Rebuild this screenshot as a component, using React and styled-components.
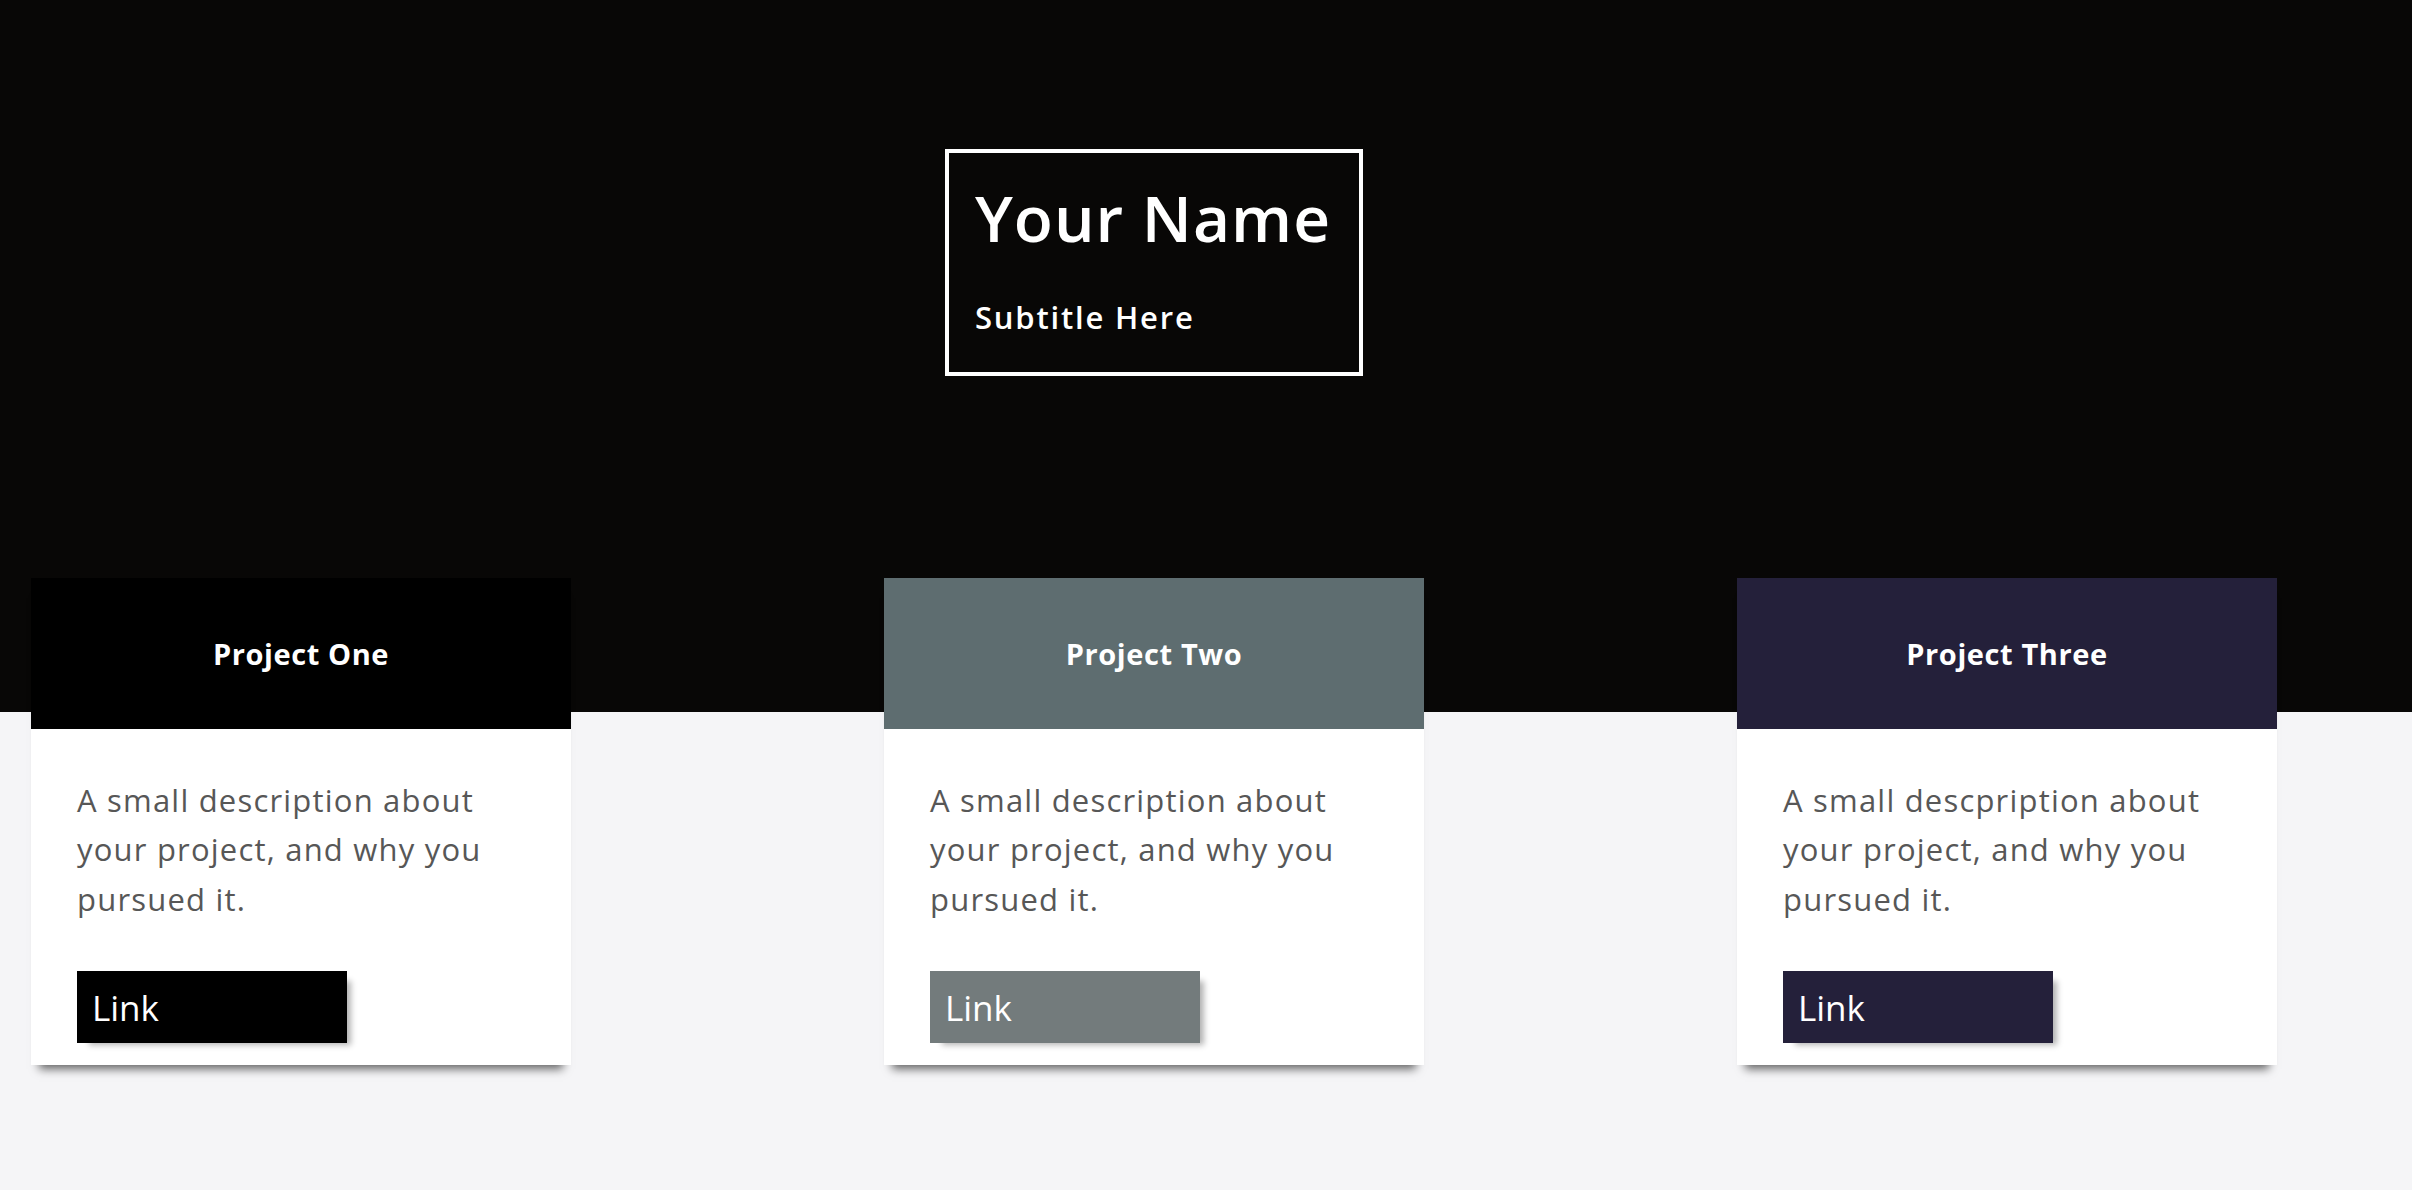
import React from "react";
import styled, { createGlobalStyle } from "styled-components";

const GlobalStyle = createGlobalStyle`
  html, body { margin: 0; padding: 0; }
  body {
    background: #f5f5f7;
    font-family: "Open Sans", Lato, "Liberation Sans", sans-serif;
  }
  * { box-sizing: border-box; }
`;

const Page = styled.div`
  min-height: 1190px;
  background: linear-gradient(to bottom, #080706 0, #080706 712px, #f5f5f7 712px);
  padding-top: 149px;
`;

const Container = styled.div`
  margin-left: 31px;
  width: 2246px;
  display: flex;
  flex-direction: column;
  align-items: center;
`;

const TitleBox = styled.header`
  border: 4px solid #ffffff;
  padding: 27px 28px 36px 26px;
  color: #ffffff;
  display: flex;
  flex-direction: column;
  align-items: flex-start;
  gap: 42px;
`;

const Name = styled.h1`
  margin: 0;
  font-size: 64px;
  line-height: 1.2;
  font-weight: 600;
  letter-spacing: 1px;
`;

const Subtitle = styled.p`
  margin: 0;
  font-size: 31px;
  line-height: 1.2;
  font-weight: 600;
  letter-spacing: 1.8px;
`;

const CardRow = styled.section`
  align-self: stretch;
  margin-top: 202px;
  display: flex;
  justify-content: space-between;
  align-items: flex-start;
`;

const Card = styled.article`
  width: 540px;
  background: #ffffff;
  box-shadow: 0 12px 9px -8px rgba(0, 0, 0, 0.6);
`;

const CardHeader = styled.div`
  height: 151px;
  background: ${(p) => p.$bg};
  color: #ffffff;
  display: flex;
  align-items: center;
  justify-content: center;
  font-size: 29px;
  font-weight: 700;
  letter-spacing: 0.6px;
`;

const CardBody = styled.div`
  padding: 47px 46px 22px 46px;
`;

const Description = styled.p`
  margin: 0;
  font-size: 31px;
  line-height: 49.5px;
  color: #575757;
  letter-spacing: 1.2px;
`;

const LinkButton = styled.a`
  margin-top: 47px;
  width: 270px;
  height: 72px;
  display: flex;
  align-items: center;
  padding-left: 15px;
  background: ${(p) => p.$bg};
  color: #ffffff;
  font-size: 35px;
  text-decoration: none;
  box-shadow: 8px 6px 6px -4px rgba(0, 0, 0, 0.3);
`;

const projects = [
  {
    title: "Project One",
    header: "#000000",
    button: "#000000",
    text: "A small description about your project, and why you pursued it.",
  },
  {
    title: "Project Two",
    header: "#5e6d70",
    button: "#737b7c",
    text: "A small description about your project, and why you pursued it.",
  },
  {
    title: "Project Three",
    header: "#24203a",
    button: "#24203a",
    text: "A small descpription about your project, and why you pursued it.",
  },
];

export default function App() {
  return (
    <>
      <GlobalStyle />
      <Page>
        <Container>
          <TitleBox>
            <Name>Your Name</Name>
            <Subtitle>Subtitle Here</Subtitle>
          </TitleBox>
          <CardRow>
            {projects.map((p) => (
              <Card key={p.title}>
                <CardHeader $bg={p.header}>{p.title}</CardHeader>
                <CardBody>
                  <Description>{p.text}</Description>
                  <LinkButton href="#" $bg={p.button}>Link</LinkButton>
                </CardBody>
              </Card>
            ))}
          </CardRow>
        </Container>
      </Page>
    </>
  );
}
